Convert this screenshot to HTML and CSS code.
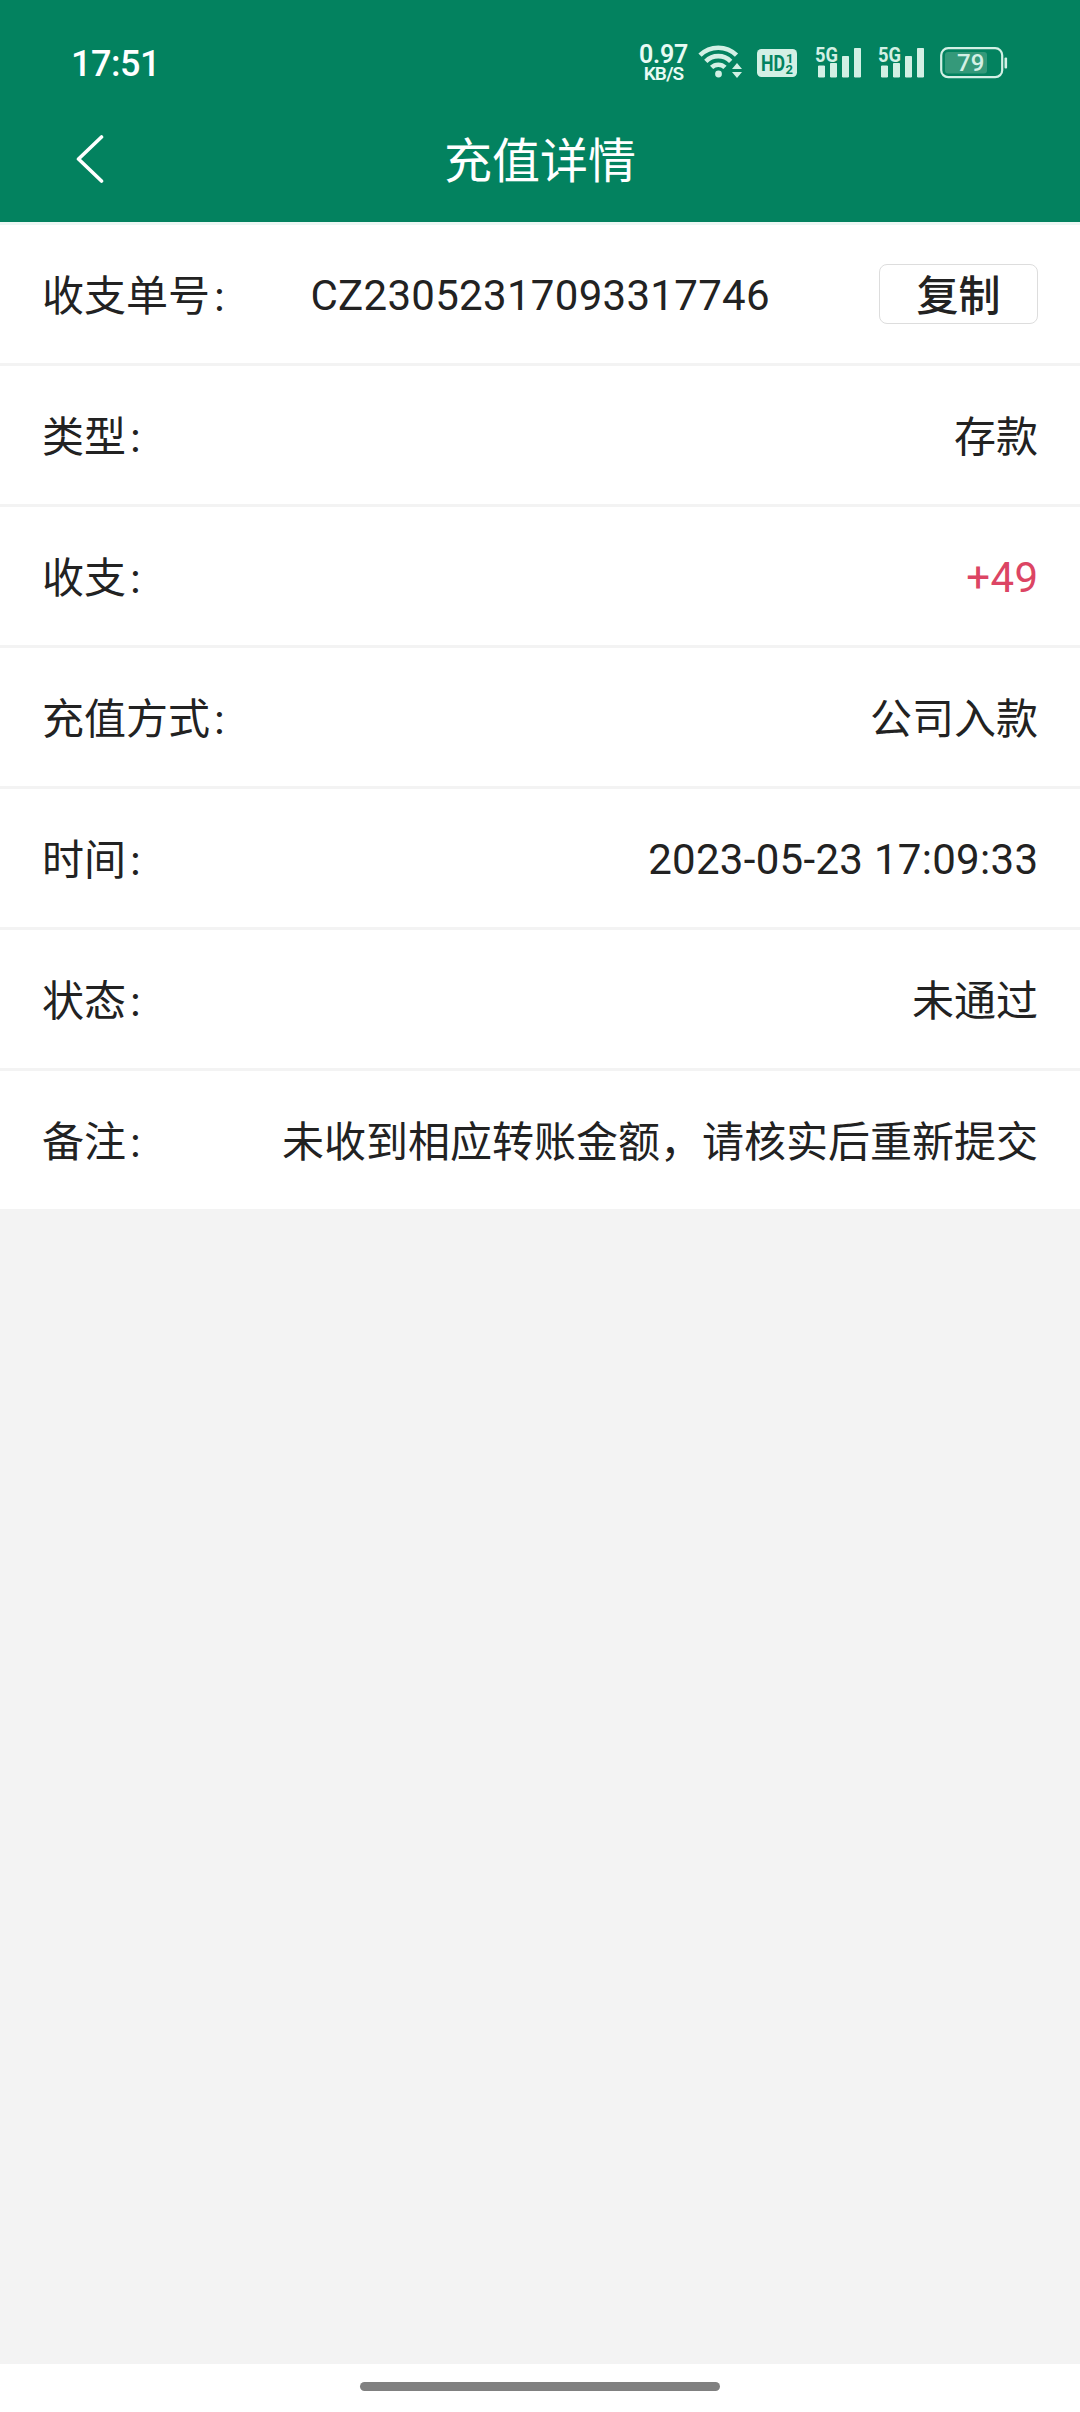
FILE: index.html
```html
<!DOCTYPE html>
<html lang="zh-CN">
<head>
<meta charset="utf-8">
<title>充值详情</title>
<link rel="stylesheet" href="styles.css">
</head>
<body>
<header class="top">
  <div class="status">
    <span class="clock">17:51</span>
    <div class="speed"><span class="speed-value">0.97</span><span class="speed-unit">KB/S</span></div>
    <svg class="wifi" width="46" height="36" viewBox="0 0 46 36">
      <g fill="none" stroke="currentColor" stroke-width="4.6">
        <path d="M2 12.2A26 26 0 0 1 38.5 12.2"/>
        <path d="M7.8 18.3A17.6 17.6 0 0 1 32.7 18.3"/>
        <path d="M13.6 24.4A9.6 9.6 0 0 1 27 24.4"/>
      </g>
      <circle cx="20.5" cy="31" r="3.4" fill="currentColor"/>
      <path d="M34 26l5-6 5 6zM34 29h10l-5 6z" fill="currentColor"/>
    </svg>
    <svg class="hd" width="40" height="28" viewBox="0 0 40 28">
      <rect width="40" height="28" rx="4.5" fill="currentColor"/>
      <g class="hd-text">
        <text x="4" y="22" font-size="22" textLength="24" lengthAdjust="spacingAndGlyphs">HD</text>
        <text x="29" y="13.5" font-size="13">1</text>
        <text x="28.5" y="25" font-size="13">2</text>
      </g>
    </svg>
    <svg class="signal" width="47" height="38" viewBox="0 -4 47 38">
      <text x="0" y="17" textLength="23" lengthAdjust="spacingAndGlyphs">5G</text>
      <path d="M3.5 21h6v11h-6zM15.5 18.5h6v13.5h-6zM27.5 11.5h6v20.5h-6zM39.5 3.5h6v28.5h-6z" stroke="currentColor" stroke-linejoin="round" fill="currentColor"/>
    </svg>
    <svg class="signal signal-second" width="47" height="38" viewBox="0 -4 47 38">
      <text x="0" y="17" textLength="23" lengthAdjust="spacingAndGlyphs">5G</text>
      <path d="M3.5 21h6v11h-6zM15.5 18.5h6v13.5h-6zM27.5 11.5h6v20.5h-6zM39.5 3.5h6v28.5h-6z" stroke="currentColor" stroke-linejoin="round" fill="currentColor"/>
    </svg>
    <svg class="battery" width="68" height="32" viewBox="0 0 68 32">
      <rect x="1.2" y="1.2" width="61" height="29" rx="7" fill="none" stroke="currentColor" stroke-width="2.2"/>
      <rect x="5" y="5" width="42" height="21.5" rx="3" fill="#35997a"/>
      <rect x="64.5" y="10.5" width="2.6" height="11" rx="1" fill="currentColor"/>
      <text x="17" y="24.3">79</text>
    </svg>
  </div>
  <div class="navbar">
    <svg class="back" width="28" height="50" viewBox="0 0 28 50"><path d="M25.5 3L2.5 25l23 22" fill="none" stroke="currentColor" stroke-width="3.6" stroke-linecap="round" stroke-linejoin="round"/></svg>
    <h1 class="title">充值详情</h1>
  </div>
</header>
<main class="details">
  <div class="row row-order"><span>收支单号<span class="colon">：</span></span><span class="latin">CZ23052317093317746</span><button class="copy" type="button">复制</button></div>
  <div class="row"><span>类型<span class="colon">：</span></span><span>存款</span></div>
  <div class="row"><span>收支<span class="colon">：</span></span><span class="latin amount">+49</span></div>
  <div class="row"><span>充值方式<span class="colon">：</span></span><span>公司入款</span></div>
  <div class="row"><span>时间<span class="colon">：</span></span><span class="latin">2023-05-23 17:09:33</span></div>
  <div class="row"><span>状态<span class="colon">：</span></span><span>未通过</span></div>
  <div class="row"><span>备注<span class="colon">：</span></span><span>未收到相应转账金额，请核实后重新提交</span></div>
</main>
<footer class="gesture"><div class="handle"></div></footer>
</body>
</html>
```
FILE: styles.css
```css
* { box-sizing: border-box; }
body {
  margin: 0;
  height: 2412px;
  display: flex;
  flex-direction: column;
  background: #f3f3f3;
  color: #222;
  font-family: Roboto, "Noto Sans CJK SC", sans-serif;
  font-size: 42px;
}
.top {
  height: 225px;
  background: #03825f;
  border-bottom: 3px solid #edf7f4;
  color: #fff;
}
.status {
  display: flex;
  align-items: flex-start;
  height: 111px;
  padding: 43px 72px 0 71px;
  color: #d3f0e5;
}
.clock {
  margin-right: auto;
  color: #fff;
  font-size: 36px;
  font-weight: 500;
  line-height: 42px;
  letter-spacing: -0.5px;
}
.speed {
  display: flex;
  flex-direction: column;
  align-items: center;
  width: 50px;
  margin-right: 9px;
  color: #e8fbf4;
  font-weight: 600;
}
.speed-value { font-size: 25px; line-height: 24px; letter-spacing: -0.3px; }
.speed-unit { font-size: 19px; line-height: 14px; letter-spacing: -0.8px; }
.hd { margin: 6px 18.5px 0 13px; }
.hd-text { fill: #03825f; font-weight: 700; }
.signal { margin-top: -2px; margin-right: 16px; }
.signal text { fill: currentColor; font-size: 21px; font-weight: 700; }
.signal-second { margin-right: 15px; }
.battery { margin-top: 4px; }
.battery text { fill: currentColor; font-size: 24px; font-weight: 500; }
.navbar {
  display: grid;
  grid-template-columns: 1fr auto 1fr;
  align-items: center;
  height: 96px;
  padding: 0 76px;
}
.title { margin: 0; padding-top: 5px; font-size: 48px; font-weight: 400; line-height: 60px; }
.row {
  display: flex;
  align-items: center;
  justify-content: space-between;
  height: 141px;
  padding: 5px 42px 0;
  border-bottom: 3px solid #f3f3f3;
  background: #fff;
  line-height: 60px;
  white-space: nowrap;
}
.row:last-child { border-bottom-width: 0; height: 138px; }
.row-order { display: grid; grid-template-columns: 1fr auto 1fr; }
.latin { letter-spacing: 0.3px; margin-right: -0.3px; padding-bottom: 2px; }
.colon {
  display: inline-block;
  transform: translate(-1px, 1px) scale(0.78);
  transform-origin: 25% 60%;
}
.copy {
  justify-self: end;
  width: 159px;
  height: 60px;
  margin-bottom: 5px;
  padding: 4px 0 0;
  border: 1px solid #ddd;
  border-radius: 8px;
  background: #fff;
  color: #222;
  font: inherit;
  font-weight: 500;
  line-height: 56px;
}
.amount { color: #dc4564; }
.gesture {
  display: flex;
  justify-content: center;
  height: 48px;
  margin-top: auto;
  padding-top: 18px;
  background: #fff;
}
.handle { width: 360px; height: 9px; border-radius: 5px; background: #808080; }
```
